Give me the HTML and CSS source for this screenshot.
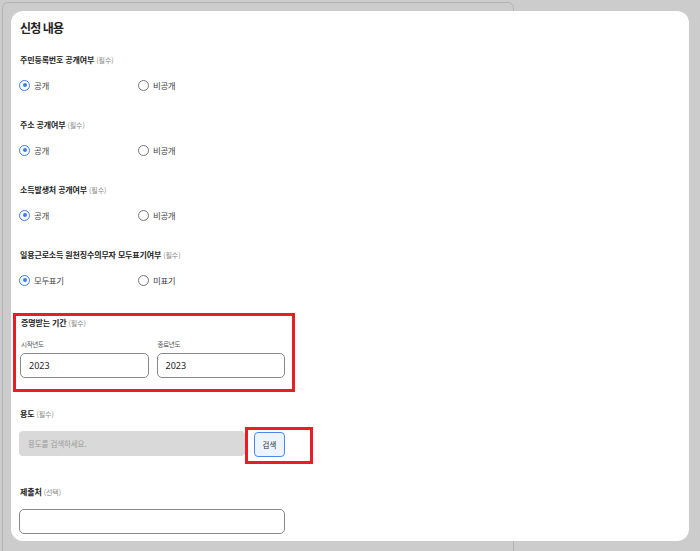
FILE: index.html
```html
<!DOCTYPE html>
<html lang="ko">
<head>
<meta charset="utf-8">
<link rel="stylesheet" href="styles.css">
</head>
<body>
<div class="backdrop"></div>
<div class="card">
  <h2 class="title">신청 내용</h2>

  <div class="field">
    <div class="label">주민등록번호 공개여부 <span class="req">(필수)</span></div>
    <div class="options">
      <label class="opt"><span class="radio on"></span>공개</label>
      <label class="opt"><span class="radio"></span>비공개</label>
    </div>
  </div>

  <div class="field">
    <div class="label">주소 공개여부 <span class="req">(필수)</span></div>
    <div class="options">
      <label class="opt"><span class="radio on"></span>공개</label>
      <label class="opt"><span class="radio"></span>비공개</label>
    </div>
  </div>

  <div class="field">
    <div class="label">소득발생처 공개여부 <span class="req">(필수)</span></div>
    <div class="options">
      <label class="opt"><span class="radio on"></span>공개</label>
      <label class="opt"><span class="radio"></span>비공개</label>
    </div>
  </div>

  <div class="field">
    <div class="label">일용근로소득 원천징수의무자 모두표기여부 <span class="req">(필수)</span></div>
    <div class="options">
      <label class="opt"><span class="radio on"></span>모두표기</label>
      <label class="opt"><span class="radio"></span>미표기</label>
    </div>
  </div>

  <div class="period highlight">
    <div class="label">증명받는 기간 <span class="req">(필수)</span></div>
    <div class="years">
      <div class="year">
        <div class="sublabel">시작년도</div>
        <div class="input">2023</div>
      </div>
      <div class="year">
        <div class="sublabel">종료년도</div>
        <div class="input">2023</div>
      </div>
    </div>
  </div>

  <div class="purpose">
    <div class="label">용도 <span class="req">(필수)</span></div>
    <div class="search-row">
      <div class="search-input">용도를 검색하세요.</div>
      <div class="btn-wrap highlight"><button class="btn">검색</button></div>
    </div>
  </div>

  <div class="submit">
    <div class="label">제출처 <span class="req">(선택)</span></div>
    <div class="input wide"></div>
  </div>
</div>
</body>
</html>
```

FILE: styles.css
```css
* { box-sizing: border-box; }
html, body { margin: 0; padding: 0; }
body {
  background: #cccccc;
  font-family: "Noto Sans CJK KR", "Noto Sans", sans-serif;
  color: #222;
  width: 700px;
  height: 551px;
  overflow: hidden;
  position: relative;
}
.backdrop {
  position: absolute;
  left: 2px;
  top: 2px;
  width: 512px;
  height: 560px;
  border: 1px solid #b4b4b4;
  border-radius: 6px;
}
.card {
  position: relative;
  margin: 11px;
  height: 530px;
  width: 678px;
  background: #fff;
  border-radius: 12px;
  padding: 12px 8px 0 8px;
  overflow: hidden;
}
.title {
  margin: 0 0 0 1px;
  font-size: 12px;
  line-height: 10px;
  font-weight: 700;
  letter-spacing: -0.9px;
  color: #222;
}
.label {
  font-size: 8px;
  line-height: 12px;
  font-weight: 700;
  letter-spacing: -0.15px;
  color: #222;
  margin-left: 1px;
}
.req {
  font-size: 7px;
  font-weight: 400;
  color: #888;
  letter-spacing: -0.1px;
}
.field { margin-top: 21px; }
.field + .field { margin-top: 28px; }
.options {
  display: flex;
  margin-top: 13px;
  height: 12px;
  align-items: center;
}
.opt {
  display: flex;
  align-items: center;
  width: 119px;
  font-size: 8.5px;
  letter-spacing: -0.4px;
  color: #444;
}
.radio {
  width: 11px;
  height: 11px;
  border-radius: 50%;
  border: 1.2px solid #777;
  margin-right: 4px;
  display: flex;
  align-items: center;
  justify-content: center;
  flex: none;
}
.radio.on { border-color: #3b7df0; }
.radio.on::after {
  content: "";
  width: 4px;
  height: 4px;
  border-radius: 50%;
  background: #3b7df0;
}
.highlight { border: 3px solid #ec1c24; }
.period {
  margin: 27px 0 0 -6px;
  width: 282px;
  padding: 1px 7px 11px 4px;
}
.years {
  display: flex;
  gap: 8px;
  margin-top: 10px;
}
.year { width: 129px; }
.sublabel {
  font-size: 6.5px;
  line-height: 10px;
  color: #555;
  letter-spacing: -0.3px;
  margin-left: 1px;
}
.input {
  margin-top: 4px;
  height: 25px;
  border: 1px solid #888;
  border-radius: 5px;
  font-family: "Noto Sans", sans-serif;
  font-size: 9px;
  line-height: 23px;
  padding-left: 8px;
  color: #222;
}
.purpose { margin-top: 16px; }
.search-row {
  display: flex;
  align-items: flex-start;
  margin-top: 11px;
}
.search-input {
  width: 226px;
  height: 25px;
  background: #d9d9d9;
  border-radius: 4px;
  font-size: 7.5px;
  line-height: 25px;
  padding-left: 9px;
  color: #9a9a9a;
  letter-spacing: -0.1px;
}
.btn-wrap {
  margin-top: -4px;
  width: 68px;
  height: 37px;
  padding: 2px 0 0 6px;
}
.btn {
  display: block;
  width: 31px;
  height: 25px;
  background: #edf3ff;
  border: 1px solid #4f86ec;
  border-radius: 4px;
  font-family: "Noto Sans CJK KR", sans-serif;
  font-size: 7.5px;
  color: #333;
  padding: 0;
}
.submit { margin-top: 22px; }
.submit .input { margin-top: 11px; }
.input.wide { width: 266px; }
```
